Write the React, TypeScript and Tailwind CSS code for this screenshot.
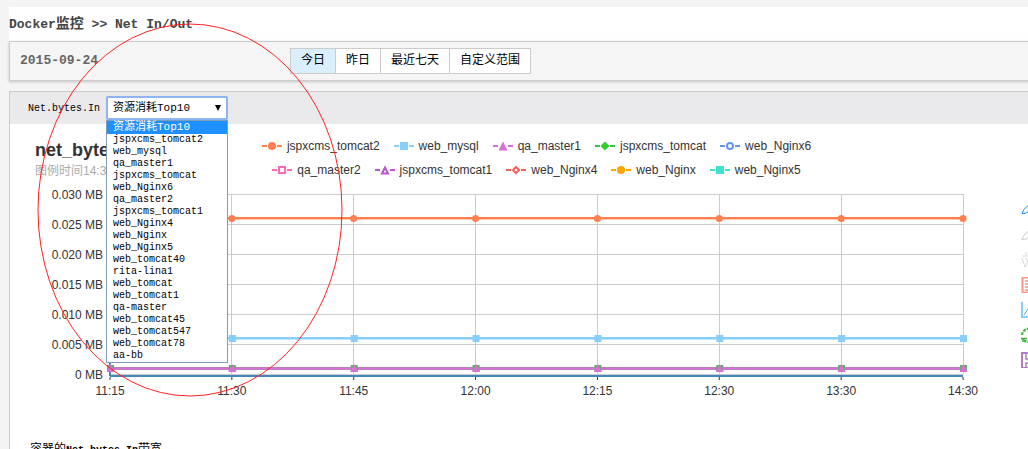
import { useState } from "react";
import type { ReactNode } from "react";

type Shape = "circle" | "rect" | "triangle" | "diamond";

const ranges = ["今日", "昨日", "最近七天", "自定义范围"];

const containers = [
  "jspxcms_tomcat2", "web_mysql", "qa_master1", "jspxcms_tomcat", "web_Nginx6",
  "qa_master2", "jspxcms_tomcat1", "web_Nginx4", "web_Nginx", "web_Nginx5",
  "web_tomcat40", "rita-lina1", "web_tomcat", "web_tomcat1", "qa-master",
  "web_tomcat45", "web_tomcat547", "web_tomcat78", "aa-bb",
];

const legend: { name: string; color: string; shape: Shape; hollow?: boolean }[][] = [
  [
    { name: "jspxcms_tomcat2", color: "#ff7f50", shape: "circle" },
    { name: "web_mysql", color: "#87cefa", shape: "rect" },
    { name: "qa_master1", color: "#da70d6", shape: "triangle" },
    { name: "jspxcms_tomcat", color: "#32cd32", shape: "diamond" },
    { name: "web_Nginx6", color: "#6495ed", shape: "circle", hollow: true },
  ],
  [
    { name: "qa_master2", color: "#ff69b4", shape: "rect", hollow: true },
    { name: "jspxcms_tomcat1", color: "#ba55d3", shape: "triangle", hollow: true },
    { name: "web_Nginx4", color: "#f0605c", shape: "diamond", hollow: true },
    { name: "web_Nginx", color: "#ffa500", shape: "circle" },
    { name: "web_Nginx5", color: "#40e0d0", shape: "rect" },
  ],
];

const times = ["11:15", "11:30", "11:45", "12:00", "12:15", "12:30", "13:30", "14:30"];
const levels = ["0.030 MB", "0.025 MB", "0.020 MB", "0.015 MB", "0.010 MB", "0.005 MB", "0 MB"];

const at = (i: number) => `${(i * 100) / (times.length - 1)}%`;

function LegendMark({ color, shape, hollow }: { color: string; shape: Shape; hollow?: boolean }) {
  const paint = hollow
    ? { fill: "#fff", stroke: color, strokeWidth: 2 }
    : { fill: color, stroke: color, strokeWidth: 0 };
  const r = hollow ? 3 : 4;
  return (
    <svg width="20" height="10" viewBox="0 0 20 10" aria-hidden="true">
      <path d="M0 5h5M15 5h5" stroke={color} strokeWidth="2" />
      {shape === "circle" && <circle cx="10" cy="5" r={r} {...paint} />}
      {shape === "rect" && <rect x={10 - r} y={5 - r} width={r * 2} height={r * 2} {...paint} />}
      {shape === "triangle" && <path d={hollow ? "M10 2.5 13 8.5H7Z" : "M10 .5 14.5 9.5h-9Z"} {...paint} />}
      {shape === "diamond" && <path d={hollow ? "M10 2 13 5 10 8 7 5Z" : "M10 .5 14.5 5 10 9.5 5.5 5Z"} {...paint} />}
    </svg>
  );
}

function Plot() {
  return (
    <svg className="h-[180px] min-w-0 flex-1 overflow-visible" role="img" aria-label="net_bytes">
      <g stroke="#ccc" shapeRendering="crispEdges">
        {levels.map((l, i) => (
          <line key={l} x1="0" x2="100%" y1={i * 30 + 0.5} y2={i * 30 + 0.5} />
        ))}
        {times.map((t, i) => (
          <line key={t} x1={at(i)} x2={at(i)} y1="0" y2="180" />
        ))}
      </g>
      <g stroke="#4488bb" strokeWidth="2" shapeRendering="crispEdges">
        <line x1="0" x2="0" y1="0" y2="182" />
        <line x1="0" x2="100%" y1="182" y2="182" />
      </g>

      <g className="font-['Liberation_Sans',sans-serif] text-[12px]" fill="#333">
        {levels.map((l, i) => (
          <text key={l} x="-7" y={i * 30 + 5} textAnchor="end">{l}</text>
        ))}
        {times.map((t, i) => (
          <text key={t} x={at(i)} y="201" textAnchor="middle">{t}</text>
        ))}
      </g>

      {/* series, lowest one covers the overlapping containers */}
      <line x1="0" x2="100%" y1="24.5" y2="24.5" stroke="#ffc8b0" strokeWidth="3" />
      <line x1="0" x2="100%" y1="24" y2="24" stroke="#ff7f50" strokeWidth="2" />
      <line x1="0" x2="100%" y1="144.5" y2="144.5" stroke="#c3e6fc" strokeWidth="3" />
      <line x1="0" x2="100%" y1="144" y2="144" stroke="#87cefa" strokeWidth="2" />
      <line x1="0" x2="100%" y1="174.5" y2="174.5" stroke="#a08aa4" strokeWidth="3" />
      <line x1="0" x2="100%" y1="174.5" y2="174.5" stroke="#da70d6" strokeWidth="2" />
      {times.map((t, i) => (
        <svg key={t} x={at(i)} className="overflow-visible">
          <path d="M0 183v3" stroke="#333" />
          <circle cy="24.5" r="3.5" fill="#ff7f50" />
          <rect x="-3" y="141" width="7" height="7" fill="#87cefa" />
          <rect x="-3" y="171" width="7" height="7" fill="#5fae68" />
          <path d="M.5 170 4.500 178h-8Z" fill="#da70d6" />
        </svg>
      ))}
    </svg>
  );
}

function Tool({ label, color, children }: { label: string; color: string; children: ReactNode }) {
  return (
    <button type="button" aria-label={label} className="block size-4">
      <svg width="16" height="16" viewBox="0 0 16 16" fill="none" stroke={color} aria-hidden="true">
        {children}
      </svg>
    </button>
  );
}

function Toolbox() {
  return (
    <div className="flex w-20 shrink-0 flex-col gap-[9px] pt-2 pl-[58px]">
      <Tool label="辅助线开关" color="#1e90ff">
        <path d="M1 11.500Q2 7 7 3.500L11 1l3 3-6 5Q5 12 1 11.500ZM1 11.500h3" />
      </Tool>
      <Tool label="删除辅助线" color="#ccc">
        <path d="M1 12.500Q2 8 7 4.500L11 2l3 3-6 5Q5 13 1 12.500Z" />
      </Tool>
      <Tool label="清空辅助线" color="#d8d8d8">
        <path d="M1 4h14M5 0v3" strokeWidth="1" />
        <path d="M1 6l3 9 4-7 4 7 3-9M5 6l3 7 3-7" />
      </Tool>
      <Tool label="数据视图" color="#f99488">
        <path d="M1.500 0v16M1 .500h14v15H1" strokeWidth="2" />
        <path d="M4 4h8M4 7h8M4 10h8M4 13h8" strokeWidth="1.500" />
      </Tool>
      <Tool label="折线图切换" color="#87cefa">
        <path d="M1 0v15h15" strokeWidth="2" />
        <path d="M3 13l4-6 3 3 5-7" stroke="#4a9ef0" strokeWidth="1" />
      </Tool>
      <Tool label="还原" color="#32b432">
        <path d="M1 8a7 7 0 0 1 13-3M15 10a7 7 0 0 1-12 3" strokeWidth="2" strokeDasharray="3 1" />
        <path d="M0 11.500h6M2 11v4M16 5.500h-5M14 1v4" strokeWidth="1.500" />
      </Tool>
      <Tool label="保存为图片" color="#ae7dc2">
        <path d="M1 1h14v15H1Z" strokeWidth="2" />
        <path d="M5 1v6h6V1M8 3v2M5 15v-4h6v4" strokeWidth="1.500" />
      </Tool>
    </div>
  );
}

export default function App() {
  const [range, setRange] = useState(ranges[0]);
  const [target, setTarget] = useState("资源消耗Top10");

  return (
    <div className="relative h-screen overflow-hidden bg-[#f4f4f4] pt-[7px] font-['Liberation_Mono','Noto_Sans_CJK_SC',monospace] text-black">
      <main className="-mr-9 ml-[9px]">
        <h1 className="h-[34px] bg-white text-[13px] leading-[34px] font-bold whitespace-pre text-[#444]">
          Docker<span className="text-[14px]">监控</span> &gt;&gt; Net In/Out
        </h1>

        <div className="flex h-10 items-center border border-[#ccc] bg-[#f5f5f5] shadow-[0_1px_3px_rgba(0,0,0,0.2)]">
          <time className="w-[280px] pl-[10px] text-[13px] font-bold text-[#666]">2015-09-24</time>
          <div className="flex border-l border-[#ccc]">
            {ranges.map((r) => (
              <button
                key={r}
                type="button"
                onClick={() => setRange(r)}
                className={`h-[26px] border-y border-r border-[#ccc] px-[10px] text-[12px] leading-6 ${
                  r === range ? "bg-[#d9f0fc]" : "bg-white"
                }`}
              >
                {r}
              </button>
            ))}
          </div>
        </div>

        <section className="mt-[10px] border border-[#ccc] bg-white">
          <div className="flex h-8 items-center gap-[6px] bg-[#eaeaec] pl-[18px]">
            <label htmlFor="target" className="text-[10px]">Net.bytes.In</label>
            <div className="relative w-[122px]">
              <select
                id="target"
                value={target}
                onChange={(e) => setTarget(e.target.value)}
                className="block h-6 w-full appearance-none rounded-[2px] border-2 border-[#8fb4f2] bg-white pl-[5px] text-[11px] outline-none"
              >
                <option>资源消耗Top10</option>
                {containers.map((c) => <option key={c}>{c}</option>)}
              </select>
              <svg className="pointer-events-none absolute top-[9px] right-[7px]" width="6" height="6" viewBox="0 0 6 6" aria-hidden="true">
                <path d="M0 0h6L3 6Z" fill="#000" />
              </svg>
              <ul role="listbox" aria-label="Net.bytes.In" className="absolute top-full left-0 z-10 w-full border border-[#7f9db9] bg-white text-[10px] leading-3">
                <li role="option" aria-selected="true" className="h-[13px] bg-[#1e90ff] pl-[6px] text-[11px] leading-[13px] text-white">资源消耗Top10</li>
                {containers.map((c) => (
                  <li key={c} role="option" aria-selected="false" className="h-3 pl-[6px]">{c}</li>
                ))}
              </ul>
            </div>
          </div>

          <div className="px-5">
            <div className="grid h-[70px] font-['Liberation_Sans','Noto_Sans_CJK_SC',sans-serif]">
              <div className="col-start-1 row-start-1 pt-[14px] pl-[5px]">
                <h2 className="text-[18px] leading-6 font-bold text-[#333]">net_bytes</h2>
                <p className="text-[12px] leading-[18px] text-[#aaa]">图例时间14:30</p>
              </div>
              <div className="col-start-1 row-start-1 pt-[10px] text-[12px] leading-6 text-[#333]">
                {legend.map((row, i) => (
                  <ul key={i} className="flex justify-center gap-[14px]">
                    {row.map((s) => (
                      <li key={s.name} className="flex items-center gap-[5px]">
                        <LegendMark {...s} />
                        {s.name}
                      </li>
                    ))}
                  </ul>
                ))}
              </div>
            </div>
            <div className="flex h-[180px] pl-20">
              <Plot />
              <Toolbox />
            </div>
            <p className="mt-[68px] pb-5 text-[10px] leading-4">
              <span className="text-[12px]">容器的</span>
              <b>Net.bytes.In</b>
              <span className="text-[12px]">带宽</span>
            </p>
          </div>
        </section>
      </main>

      {/* hand-marked ring around the container picker */}
      <svg className="pointer-events-none absolute top-[23px] left-[37px] z-20" width="306" height="374" aria-hidden="true">
        <ellipse cx="153" cy="187" rx="152" ry="186" fill="none" stroke="#f22" />
      </svg>
    </div>
  );
}
